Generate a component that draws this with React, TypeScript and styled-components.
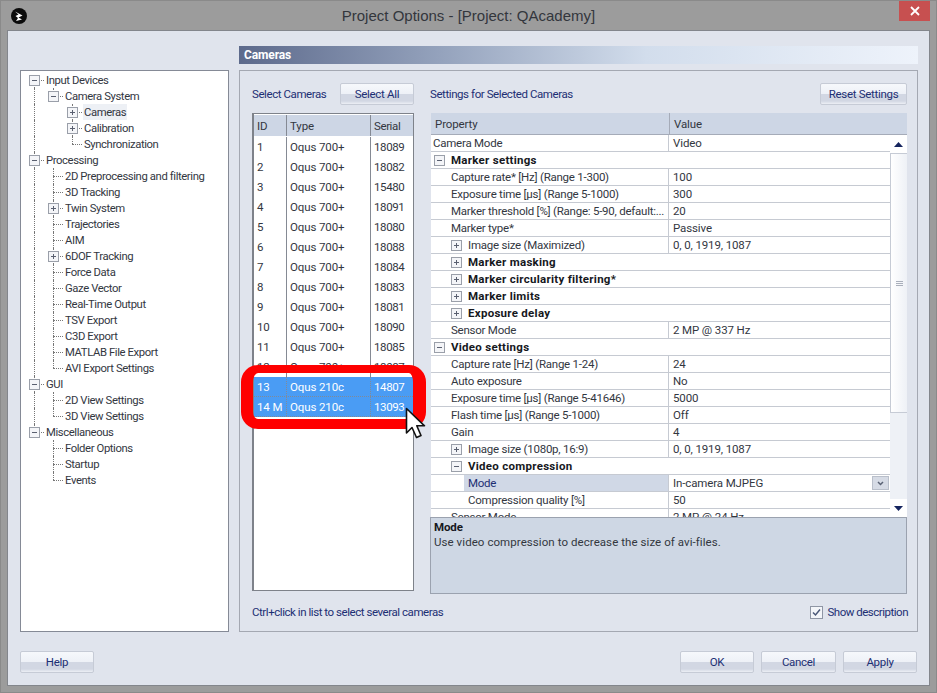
import React from "react";
import styled, { createGlobalStyle } from "styled-components";

const Global = createGlobalStyle`
  html, body { margin: 0; padding: 0; }
  body { width: 937px; height: 693px; overflow: hidden; background: #9c9c9c; }
  * { box-sizing: border-box; }
`;

const Win = styled.div`
  width: 937px; height: 693px; background: #9c9c9c; display: flex; flex-direction: column;
  border: 1px solid #8a8a8a;
  font-family: Roboto, "Liberation Sans", Arial, sans-serif; font-size: 11.5px; letter-spacing: -0.12px; color: #33373f;
`;
const TitleBar = styled.div`
  height: 29px; flex: none; display: flex; align-items: center; justify-content: center; position: relative;
  font-family: "Liberation Sans", Arial, sans-serif; letter-spacing: 0; font-size: 15px; color: #33363c;
`;
const Logo = styled.svg` position: absolute; left: 9px; top: 6px; `;
const CloseBtn = styled.div`
  position: absolute; right: 6px; top: 0; width: 31px; height: 20px; background: #c75050;
  display: flex; align-items: center; justify-content: center;
`;
const Client = styled.div`
  flex: 1; margin: 0 6px 6px 6px; background: #e0e4ed; border: 1px solid #83868c;
  display: flex; flex-direction: column; padding: 15px 11px 12px 12px;
`;
const Main = styled.div`
  display: grid; grid-template-columns: 209px 679px; column-gap: 10px; grid-template-rows: 18px 562px; row-gap: 6px;
`;
const Header = styled.div`
  grid-column: 2; grid-row: 1; display: flex; align-items: center; padding-left: 5px;
  font-weight: bold; font-size: 12px; color: #fff;
  background: linear-gradient(90deg, #5d6a8c 0%, #95a3bd 30%, #d2ddec 60%, #eef3fb 100%);
`;
const Tree = styled.div`
  grid-column: 1; grid-row: 2; background: #fff; border: 1px solid #858a96; padding: 1px 0 0 4px; overflow: hidden;
`;
const TreeRow = styled.div`
  height: 16px; display: flex; align-items: center;
`;
const Guide = styled.span<{ $on?: boolean }>`
  width: 19px; height: 16px; flex: none; position: relative;
  ${(p) => p.$on && `&::before { content: ""; position: absolute; left: 9px; top: 0; bottom: 0; border-left: 1px dotted #777; }`}
`;
const Joint = styled.span<{ $next?: boolean; $first?: boolean }>`
  width: 19px; height: 16px; flex: none; position: relative; display: flex; align-items: center; justify-content: center;
  &::before { content: ""; position: absolute; left: 9px; top: ${(p) => (p.$first ? "8px" : "0")}; height: ${(p) => (p.$next ? (p.$first ? "8px" : "16px") : "8px")}; border-left: 1px dotted #777; }
  &::after { content: ""; position: absolute; left: 9px; top: 8px; width: 10px; border-top: 1px dotted #777; }
`;
const ExpBox = styled.svg` position: relative; z-index: 1; display: block; flex: none; `;
const TreeLabel = styled.span<{ $sel?: boolean }>`
  margin-left: 1px; padding: 1px 1px 0; height: 16px; line-height: 15px; white-space: nowrap; font-size: 11.3px; letter-spacing: -0.4px;
  background: ${(p) => (p.$sel ? "#edf0f5" : "transparent")};
`;
const Panel = styled.div`
  grid-column: 2; grid-row: 2; border: 1px solid #a4a8b2; padding: 12px 10px 0 12px;
  display: grid; grid-template-columns: 162px 477px; column-gap: 16px; grid-template-rows: 22px 8px 480px 38px;
`;
const TopRow = styled.div`
  display: flex; align-items: center; justify-content: space-between; color: #1d2f74;
`;
const TopLabel = styled.span` letter-spacing: -0.42px; `;
const Btn = styled.div<{ $w: number }>`
  width: ${(p) => p.$w}px; height: 22px; flex: none; display: flex; align-items: center; justify-content: center;
  color: #1d2f74; border: 1px solid #c6cbd6; border-radius: 2px; letter-spacing: -0.3px;
  background: linear-gradient(180deg, #f6f8fc 0%, #eef1f7 48%, #d2d7e3 50%, #d2d7e3 85%, #eceff5 100%);
`;
const Spacer = styled.div` grid-column: 1 / 3; `;
const CamWrap = styled.div` position: relative; height: 478px; `;
const CamTable = styled.div`
  height: 478px; background: #fff; border: 1px solid #7e828a; border-left-width: 2px; padding-top: 1px; overflow: hidden;
`;
const CamCell = styled.div`
  padding-left: 3px; display: flex; align-items: center; border-right: 1px solid #858a94; white-space: nowrap; overflow: hidden;
  &:last-child { border-right: 0; letter-spacing: -0.4px; }
`;
const CamRow = styled.div<{ $sel?: boolean; $head?: boolean }>`
  display: grid; grid-template-columns: 33px 84px 43px; height: ${(p) => (p.$head ? "21px" : "20px")};
  margin-bottom: ${(p) => (p.$head ? "1px" : "0")};
  color: ${(p) => (p.$sel ? "#fff" : "inherit")};
  background: ${(p) => (p.$head ? "#cdd6e5" : p.$sel ? "#4a9cf4" : "transparent")};
  ${(p) => p.$sel && `border-bottom: 1px dotted #7f8a99; & > div { border-right-style: dotted; }`}
`;
const Ring = styled.div`
  position: absolute; left: -11px; top: 252px; width: 185px; height: 64px; border-style: solid; border-color: #fe0000; border-width: 8px 13px 10px 12px; border-radius: 17px; pointer-events: none;
`;
const Cursor = styled.svg` position: absolute; left: 153px; top: 294px; `;

const RightCol = styled.div` display: flex; flex-direction: column; height: 480px; `;
const Grid = styled.div` height: 404px; flex: none; display: flex; flex-direction: column; background: #fff; padding-left: 1px; background-clip: content-box; `;
const GridHead = styled.div`
  height: 22px; flex: none; display: grid; grid-template-columns: 239px 1fr; background: #cdd6e5; border-bottom: 1px solid #a5abb8;
`;
const HeadCell = styled.div` display: flex; align-items: center; padding-left: 4px; border-right: 1px solid #a5abb8; &:last-child { border-right: 0; } `;
const GridBody = styled.div` flex: 1; display: flex; min-height: 0; `;
const Rows = styled.div` flex: 1; min-width: 0; overflow: hidden; `;
const Row = styled.div`
  height: 17px; display: grid; grid-template-columns: 238px 1fr; border-bottom: 1px solid #c6cad2;
`;
const GroupRow = styled.div`
  height: 17px; display: flex; align-items: center; border-bottom: 1px solid #c6cad2; font-weight: bold; letter-spacing: 0.28px; color: #16181d; white-space: nowrap;
`;
const NameCell = styled.div<{ $indent: number; $sel?: boolean }>`
  padding-left: ${(p) => p.$indent}px; display: flex; align-items: center; white-space: nowrap; overflow: hidden; letter-spacing: -0.24px;
  border-right: 1px solid #c6cad2; position: relative; color: ${(p) => (p.$sel ? "#1d2f74" : "inherit")};
`;
const SelBg = styled.span`
  flex: 1; align-self: stretch; display: flex; align-items: center; margin-left: -4px; padding-left: 4px; background: #d0d8e6;
`;
const ExpSlot = styled.span<{ $x: number; $gap: number }>`
  margin-left: ${(p) => p.$x}px; margin-right: ${(p) => p.$gap}px; flex: none; display: flex;
`;
const ValueCell = styled.div` padding-left: 4px; display: flex; align-items: center; justify-content: space-between; white-space: nowrap; `;
const DropBtn = styled.span`
  width: 17px; height: 14px; margin-right: 1px; background: #d6dbe5; border: 1px solid #b9bfca; display: flex; align-items: center; justify-content: center;
`;
const ScrollBar = styled.div`
  width: 17px; flex: none; display: flex; flex-direction: column; align-items: stretch; background: #eef1f6;
`;
const Arrow = styled.div` height: 18px; flex: none; display: flex; align-items: center; justify-content: center; background: #fff; `;
const Thumb = styled.div`
  height: 260px; flex: none; background: linear-gradient(90deg, #fff, #eef1f6); border: 1px solid #c6cbd5; border-width: 1px 0 1px 1px;
  display: flex; align-items: center; justify-content: center;
`;
const Track = styled.div` flex: 1; `;
const Grip = styled.span` width: 7px; height: 5px; border-top: 1px solid #a9afbb; border-bottom: 1px solid #a9afbb; position: relative; &::after { content: ""; position: absolute; left: 0; right: 0; top: 1px; border-top: 1px solid #a9afbb; } `;
const Desc = styled.div`
  height: 77px; flex: none; background: #ced7e4; border: 1px solid #9ba2af; padding: 2px 3px; line-height: 15px; letter-spacing: 0.07px;
`;
const DescTitle = styled.div` font-weight: bold; color: #16181d; letter-spacing: -0.12px; `;
const BottomL = styled.div` display: flex; align-items: center; color: #1d2f74; padding-bottom: 1px; white-space: nowrap; letter-spacing: -0.45px; `;
const BottomR = styled.div` display: flex; align-items: center; justify-content: flex-end; color: #1d2f74; white-space: nowrap; letter-spacing: -0.49px; margin-right: -1px; `;
const Check = styled.svg` margin-right: 4px; display: block; `;
const Footer = styled.div` display: flex; justify-content: space-between; margin-top: 19px; padding-right: 1px; `;
const FooterRight = styled.div` display: flex; gap: 7px; `;

type Node = { t: string; kids?: Node[]; closed?: boolean; sel?: boolean };
const tree: Node[] = [
  { t: "Input Devices", kids: [
    { t: "Camera System", kids: [
      { t: "Cameras", closed: true, sel: true, kids: [] },
      { t: "Calibration", closed: true, kids: [] },
      { t: "Synchronization" },
    ] },
  ] },
  { t: "Processing", kids: [
    { t: "2D Preprocessing and filtering" },
    { t: "3D Tracking" },
    { t: "Twin System", closed: true, kids: [] },
    { t: "Trajectories" },
    { t: "AIM" },
    { t: "6DOF Tracking", closed: true, kids: [] },
    { t: "Force Data" },
    { t: "Gaze Vector" },
    { t: "Real-Time Output" },
    { t: "TSV Export" },
    { t: "C3D Export" },
    { t: "MATLAB File Export" },
    { t: "AVI Export Settings" },
  ] },
  { t: "GUI", kids: [{ t: "2D View Settings" }, { t: "3D View Settings" }] },
  { t: "Miscellaneous", kids: [{ t: "Folder Options" }, { t: "Startup" }, { t: "Events" }] },
];

const Exp = ({ open }: { open: boolean }) => (
  <ExpBox width="11" height="11" viewBox="0 0 11 11">
    <rect x=".5" y=".5" width="10" height="10" fill="#f4f5f8" stroke="#9a9fa9" />
    <path d={open ? "M3 5.5h5" : "M3 5.5h5M5.5 3v5"} stroke="#5a6070" fill="none" />
  </ExpBox>
);

function renderTree(nodes: Node[], guides: boolean[], out: React.ReactNode[], root = false) {
  nodes.forEach((n, i) => {
    const next = i < nodes.length - 1;
    out.push(
      <TreeRow key={out.length}>
        {guides.map((g, k) => <Guide key={k} $on={g} />)}
        <Joint $next={next} $first={root && i === 0}>{n.kids && <Exp open={!n.closed} />}</Joint>
        <TreeLabel $sel={n.sel}>{n.t}</TreeLabel>
      </TreeRow>
    );
    if (n.kids && !n.closed) renderTree(n.kids, [...guides, next], out);
  });
}

const cams = [
  ["1", "18089"], ["2", "18082"], ["3", "15480"], ["4", "18091"], ["5", "18080"], ["6", "18088"],
  ["7", "18084"], ["8", "18083"], ["9", "18081"], ["10", "18090"], ["11", "18085"], ["12", "18087"],
];

type P =
  | { k: "g"; name: string; exp?: "open" | "closed"; x: number; gap: number }
  | { k: "r"; name: string; val: string; ind: number; exp?: boolean; sel?: boolean; drop?: boolean };
const props: P[] = [
  { k: "r", name: "Camera Mode", val: "Video", ind: 2 },
  { k: "g", name: "Marker settings", exp: "open", x: 1, gap: 6 },
  { k: "r", name: "Capture rate* [Hz] (Range 1-300)", val: "100", ind: 20 },
  { k: "r", name: "Exposure time [µs] (Range 5-1000)", val: "300", ind: 20 },
  { k: "r", name: "Marker threshold [%] (Range: 5-90, default:...", val: "20", ind: 20 },
  { k: "r", name: "Marker type*", val: "Passive", ind: 20 },
  { k: "r", name: "Image size (Maximized)", val: "0, 0, 1919, 1087", ind: 20, exp: true },
  { k: "g", name: "Marker masking", exp: "closed", x: 18, gap: 6 },
  { k: "g", name: "Marker circularity filtering*", exp: "closed", x: 18, gap: 6 },
  { k: "g", name: "Marker limits", exp: "closed", x: 18, gap: 6 },
  { k: "g", name: "Exposure delay", exp: "closed", x: 18, gap: 6 },
  { k: "r", name: "Sensor Mode", val: "2 MP @ 337 Hz", ind: 20 },
  { k: "g", name: "Video settings", exp: "open", x: 1, gap: 6 },
  { k: "r", name: "Capture rate [Hz] (Range 1-24)", val: "24", ind: 20 },
  { k: "r", name: "Auto exposure", val: "No", ind: 20 },
  { k: "r", name: "Exposure time [µs] (Range 5-41646)", val: "5000", ind: 20 },
  { k: "r", name: "Flash time [µs] (Range 5-1000)", val: "Off", ind: 20 },
  { k: "r", name: "Gain", val: "4", ind: 20 },
  { k: "r", name: "Image size (1080p, 16:9)", val: "0, 0, 1919, 1087", ind: 20, exp: true },
  { k: "g", name: "Video compression", exp: "open", x: 18, gap: 6 },
  { k: "r", name: "Mode", val: "In-camera MJPEG", ind: 37, sel: true, drop: true },
  { k: "r", name: "Compression quality [%]", val: "50", ind: 37 },
  { k: "r", name: "Sensor Mode", val: "2 MP @ 24 Hz", ind: 20 },
];

export default function App() {
  const treeRows: React.ReactNode[] = [];
  renderTree(tree, [], treeRows, true);
  return (
    <Win>
      <Global />
      <TitleBar>
        <Logo width="18" height="18" viewBox="0 0 18 18">
          <circle cx="9" cy="9" r="8" fill="#0b0b0b" />
          <path d="M5 4.5 L12.5 8.5 L8.5 10.5 L12 12.5 L6 14 L8 11 L5.5 9 L8.5 7.5 Z" fill="#fff" />
        </Logo>
        Project Options - [Project: QAcademy]
        <CloseBtn>
          <svg width="10" height="10" viewBox="0 0 10 10"><path d="M1 1l8 8M9 1l-8 8" stroke="#fff" strokeWidth="1.8" /></svg>
        </CloseBtn>
      </TitleBar>
      <Client>
        <Main>
          <Header>Cameras</Header>
          <Tree>{treeRows}</Tree>
          <Panel>
            <TopRow>
              <TopLabel>Select Cameras</TopLabel>
              <Btn $w={74}>Select All</Btn>
            </TopRow>
            <TopRow>
              <TopLabel>Settings for Selected Cameras</TopLabel>
              <Btn $w={87}>Reset Settings</Btn>
            </TopRow>
            <Spacer />
            <CamWrap>
              <CamTable>
                <CamRow $head>
                  <CamCell>ID</CamCell><CamCell>Type</CamCell><CamCell>Serial</CamCell>
                </CamRow>
                {cams.map(([id, s]) => (
                  <CamRow key={id}>
                    <CamCell>{id}</CamCell><CamCell>Oqus 700+</CamCell><CamCell>{s}</CamCell>
                  </CamRow>
                ))}
                <CamRow $sel><CamCell>13</CamCell><CamCell>Oqus 210c</CamCell><CamCell>14807</CamCell></CamRow>
                <CamRow $sel><CamCell>14 M</CamCell><CamCell>Oqus 210c</CamCell><CamCell>13093</CamCell></CamRow>
              </CamTable>
              <Ring />
              <Cursor width="24" height="33" viewBox="0 0 24 33">
                <path d="M1.5 1.5 V26 L7 20.5 L11.5 30.5 L16 28.5 L11.8 18.8 H19.5 Z" fill="#fff" stroke="#111" strokeWidth="1.6" strokeLinejoin="round" />
              </Cursor>
            </CamWrap>
            <RightCol>
              <Grid>
                <GridHead>
                  <HeadCell>Property</HeadCell><HeadCell>Value</HeadCell>
                </GridHead>
                <GridBody>
                  <Rows>
                    {props.map((p, i) =>
                      p.k === "g" ? (
                        <GroupRow key={i}>
                          <ExpSlot $x={p.x + 2} $gap={p.gap}><Exp open={p.exp === "open"} /></ExpSlot>
                          {p.name}
                        </GroupRow>
                      ) : (
                        <Row key={i}>
                          <NameCell $indent={p.exp ? 0 : p.ind} $sel={p.sel}>
                            {p.exp && <ExpSlot $x={20} $gap={6}><Exp open={false} /></ExpSlot>}
                            {p.sel ? <SelBg>{p.name}</SelBg> : p.name}
                          </NameCell>
                          <ValueCell>
                            {p.val}
                            {p.drop && (
                              <DropBtn>
                                <svg width="7" height="5" viewBox="0 0 7 5"><path d="M1 1l2.5 2.5L6 1" stroke="#5a6274" strokeWidth="1.5" fill="none" /></svg>
                              </DropBtn>
                            )}
                          </ValueCell>
                        </Row>
                      )
                    )}
                  </Rows>
                  <ScrollBar>
                    <Arrow><svg width="9" height="5" viewBox="0 0 9 5"><path d="M4.5 0L9 5H0z" fill="#15245e" /></svg></Arrow>
                    <Thumb><Grip /></Thumb>
                    <Track />
                    <Arrow><svg width="9" height="5" viewBox="0 0 9 5"><path d="M4.5 5L9 0H0z" fill="#15245e" /></svg></Arrow>
                  </ScrollBar>
                </GridBody>
              </Grid>
              <Desc>
                <DescTitle>Mode</DescTitle>
                Use video compression to decrease the size of avi-files.
              </Desc>
            </RightCol>
            <BottomL>Ctrl+click in list to select several cameras</BottomL>
            <BottomR>
              <Check width="13" height="13" viewBox="0 0 13 13">
                <rect x=".5" y=".5" width="12" height="12" fill="#f3f5f9" stroke="#8f96a5" />
                <path d="M3 6.5l2.5 2.5L10 3.5" stroke="#4a5878" strokeWidth="1.5" fill="none" />
              </Check>
              Show description
            </BottomR>
          </Panel>
        </Main>
        <Footer>
          <Btn $w={74}>Help</Btn>
          <FooterRight>
            <Btn $w={74}>OK</Btn>
            <Btn $w={75}>Cancel</Btn>
            <Btn $w={74}>Apply</Btn>
          </FooterRight>
        </Footer>
      </Client>
    </Win>
  );
}
